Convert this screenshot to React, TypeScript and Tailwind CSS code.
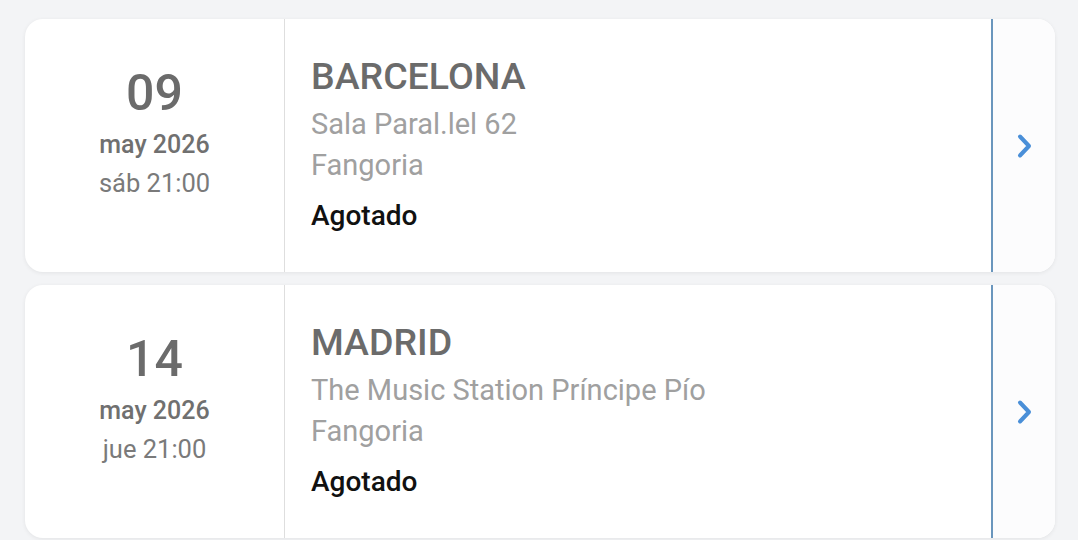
const events = [
  { day: '09', month: 'may 2026', time: 'sáb 21:00', city: 'BARCELONA', venue: 'Sala Paral.lel 62', artist: 'Fangoria', status: 'Agotado' },
  { day: '14', month: 'may 2026', time: 'jue 21:00', city: 'MADRID', venue: 'The Music Station Príncipe Pío', artist: 'Fangoria', status: 'Agotado' },
];

function Chevron() {
  return (
    <svg width="16" height="26" viewBox="0 0 16 26" fill="none">
      <polyline points="4,3.5 13,13 4,22.5" stroke="#4a8fd8" strokeWidth="4" strokeLinecap="round" strokeLinejoin="round" />
    </svg>
  );
}

export default function App() {
  return (
    <div className="min-h-[540px] w-[1078px] bg-[#f3f4f6] pt-[19px] font-['Roboto',sans-serif]">
      <div className="ml-[25px] flex w-[1030px] flex-col gap-[13px]">
        {events.map((e) => (
          <div key={e.city} className="flex h-[253px] overflow-hidden rounded-[18px] bg-white shadow-[0_1px_4px_rgba(0,0,0,0.07)]">
            {/* date */}
            <div className="flex w-[260px] shrink-0 flex-col items-center border-r border-[#dedede] pt-[46px]">
              <div className="text-[50px] font-medium leading-[56px] text-[#6b6b6b]">{e.day}</div>
              <div className="mt-[8px] text-[25px] font-medium leading-[32px] text-[#707070]">{e.month}</div>
              <div className="mt-[6px] text-[25.5px] leading-[32px] text-[#7a7a7a]">{e.time}</div>
            </div>
            {/* info */}
            <div className="flex flex-1 flex-col pl-[26px] pt-[35px]">
              <div className="text-[37.5px] font-medium leading-[44px] text-[#6b6b6b]">{e.city}</div>
              <div className="mt-[5px] text-[29px] leading-[42px] text-[#a0a0a0]">{e.venue}</div>
              <div className="text-[29px] leading-[41px] text-[#a0a0a0]">{e.artist}</div>
              <div className="mt-[12px] text-[28px] font-medium leading-[36px] text-[#111111]">{e.status}</div>
            </div>
            {/* arrow */}
            <div className="flex w-[64px] shrink-0 items-center justify-center border-l-2 border-[#6a96bd] bg-[#fcfcfd]">
              <Chevron />
            </div>
          </div>
        ))}
      </div>
    </div>
  );
}
